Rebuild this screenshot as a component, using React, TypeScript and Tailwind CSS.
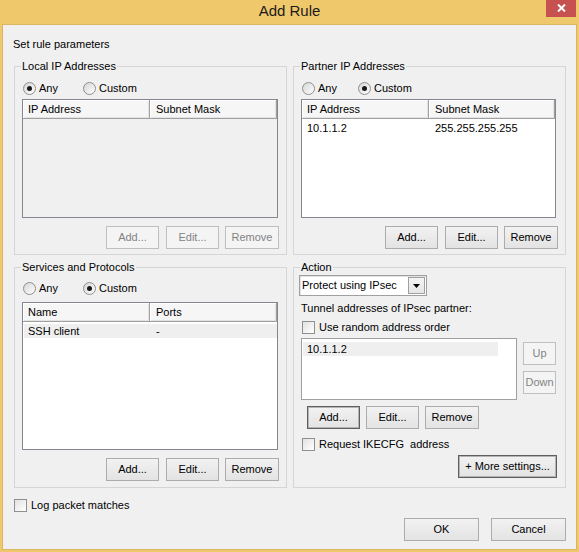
import type { ReactNode } from "react";

const btnBase =
  "flex h-[23px] items-center justify-center rounded-none border text-[11px] leading-[13px]";

function Button({
  label,
  className = "",
  disabled,
  focus,
}: {
  label: string;
  className?: string;
  disabled?: boolean;
  focus?: boolean;
}) {
  const look = disabled
    ? "border-[#bfbfbf] bg-[#f4f4f4] text-[#838383]"
    : focus
      ? "border-[#5f5f5f] bg-linear-to-b from-[#f2f2f2] to-[#e3e3e3] text-black shadow-[inset_0_0_0_1px_#b4b4b4]"
      : "border-[#acacac] bg-linear-to-b from-[#f2f2f2] to-[#e3e3e3] text-black";
  return (
    <button type="button" disabled={disabled} className={`${btnBase} ${look} ${className}`}>
      {label}
    </button>
  );
}

function Radio({ label, checked, className = "" }: { label: string; checked?: boolean; className?: string }) {
  return (
    <div className={`flex h-[13px] items-center gap-[3px] ${className}`}>
      <span className="flex h-[13px] w-[13px] items-center justify-center rounded-full border border-[#8e8f8f] bg-linear-to-br from-[#d6d6d6] to-white">
        {checked && <span className="h-[5px] w-[5px] rounded-full bg-[#1a1a1a]" />}
      </span>
      <span>{label}</span>
    </div>
  );
}

function Check({ label, className = "" }: { label: string; className?: string }) {
  return (
    <div className={`flex h-[13px] items-center gap-[4px] ${className}`}>
      <span className="h-[13px] w-[13px] border border-[#8e8f8f] bg-linear-to-br from-[#e2e2e2] to-white" />
      <span className="whitespace-pre">{label}</span>
    </div>
  );
}

function Group({
  title,
  className = "",
  legendClass = "-ml-px",
  children,
}: {
  title: string;
  className?: string;
  legendClass?: string;
  children: ReactNode;
}) {
  return (
    <fieldset className={`flex w-[273px] flex-col border border-[#d5d5d5] ${className}`}>
      <legend className={`px-px leading-[13px] ${legendClass}`}>{title}</legend>
      {children}
    </fieldset>
  );
}

type Row = { a: string; b: string; selected?: boolean };

function ListView({
  cols,
  rows,
  disabled,
  className = "",
}: {
  cols: [string, string];
  rows: Row[];
  disabled?: boolean;
  className?: string;
}) {
  return (
    <div
      className={`flex flex-col overflow-hidden border border-[#828790] ${
        disabled ? "bg-[#f0f0f0]" : "bg-white"
      } ${className}`}
    >
      <div className="flex h-[19px] shrink-0">
        <div className="flex w-[127px] items-center border border-t-0 border-l-0 border-[#a0a0a0] bg-[#f6f6f6] pl-[5px] shadow-[inset_1px_1px_0_#ffffff,inset_-1px_-1px_0_#e3e3e3]">
          {cols[0]}
        </div>
        <div className="flex flex-1 items-center border border-t-0 border-l-0 border-[#a0a0a0] bg-[#f6f6f6] pl-[6px] shadow-[inset_1px_1px_0_#ffffff,inset_-1px_-1px_0_#e3e3e3]">
          {cols[1]}
        </div>
      </div>
      <div className="flex flex-col pt-[2px]">
        {rows.map((r) => (
          <div
            key={r.a}
            className={`ml-px flex h-[14px] items-center ${r.selected ? "bg-[#efefef]" : ""}`}
          >
            <span className="w-[126px] pl-[4px]">{r.a}</span>
            <span className="pl-[6px]">{r.b}</span>
          </div>
        ))}
      </div>
    </div>
  );
}

function ButtonTrio({ disabled, className = "" }: { disabled?: boolean; className?: string }) {
  return (
    <div className={`flex justify-end ${className}`}>
      <Button label="Add..." disabled={disabled} className="w-[53px]" />
      <Button label="Edit..." disabled={disabled} className="ml-[7px] w-[53px]" />
      <Button label="Remove" disabled={disabled} className="ml-[6px] w-[54px]" />
    </div>
  );
}

export default function App() {
  return (
    <div className="flex h-[552px] w-[579px] flex-col bg-[#f0c86c] font-['Liberation_Sans',Arial,sans-serif] text-[11px] leading-[13px] text-black">
      <div className="relative flex h-[25px] shrink-0 justify-center pt-[2px]">
        <span className="text-[15px] leading-[18px] text-[#1b1b1b]">Add Rule</span>
        <div className="absolute top-0 right-[3px] flex h-[17px] w-[30px] items-center justify-center bg-[#c75050]">
          <svg width="9" height="8" viewBox="0 0 9 8" className="-mt-[2px]">
            <path d="M1 0.5 L8 7.5 M8 0.5 L1 7.5" stroke="#ffffff" strokeWidth="2" />
          </svg>
        </div>
      </div>

      <div className="mx-[3px] flex h-[524px] flex-col bg-[#f0f0f0] pt-[13px] pr-[10px] pl-[11px] shadow-[0_0_0_1px_#dbb662]">
        <div className="-ml-px h-[13px]">Set rule parameters</div>

        <div className="mt-[9px] flex gap-[6px]">
          <Group title="Local IP Addresses" className="px-[7px] pb-[5px]">
            <div className="mt-[9px] flex">
              <Radio label="Any" checked className="ml-px w-[60px]" />
              <Radio label="Custom" />
            </div>
            <ListView
              cols={["IP Address", "Subnet Mask"]}
              rows={[]}
              disabled
              className="mt-[4px] h-[119px] w-[256px]"
            />
            <ButtonTrio disabled className="mt-[8px]" />
          </Group>

          <Group title="Partner IP Addresses" className="px-[7px] pb-[5px]">
            <div className="mt-[9px] flex">
              <Radio label="Any" className="ml-px w-[56px]" />
              <Radio label="Custom" checked />
            </div>
            <ListView
              cols={["IP Address", "Subnet Mask"]}
              rows={[{ a: "10.1.1.2", b: "255.255.255.255" }]}
              className="mt-[4px] h-[119px] w-[255px]"
            />
            <ButtonTrio className="mt-[8px]" />
          </Group>
        </div>

        <div className="mt-[6px] flex gap-[6px]">
          <Group title="Services and Protocols" className="px-[7px] pb-[6px]">
            <div className="mt-[8px] flex">
              <Radio label="Any" className="ml-px w-[60px]" />
              <Radio label="Custom" checked />
            </div>
            <ListView
              cols={["Name", "Ports"]}
              rows={[{ a: "SSH client", b: "-", selected: true }]}
              className="mt-[7px] h-[148px] w-[256px]"
            />
            <ButtonTrio className="mt-[8px]" />
          </Group>

          <Group title="Action" className="pb-[9px]" legendClass="ml-[6px]">
            <div className="mt-[1px] ml-[5px] flex h-[21px] w-[128px] items-center border border-[#a0a0a0] bg-white shadow-[inset_1px_1px_0_#e3e3e3]">
              <span className="flex-1 pl-[2px]">Protect using IPsec</span>
              <span className="mr-px flex h-[17px] w-[17px] items-center justify-center border border-[#a0a0a0] bg-linear-to-b from-[#f4f4f4] to-[#e6e6e6]">
                <svg width="7" height="4" viewBox="0 0 7 4">
                  <path d="M0 0 H7 L3.5 4 Z" fill="#000000" />
                </svg>
              </span>
            </div>
            <div className="mt-[6px] pl-[7px]">Tunnel addresses of IPsec partner:</div>
            <Check label="Use random address order" className="mt-[6px] pl-[8px]" />
            <div className="mt-[4px] flex pl-[7px]">
              <div className="h-[62px] w-[216px] border border-[#a0a0a0] bg-white pt-[3px] pl-px">
                <div className="flex h-[14px] w-[195px] items-center bg-[#efefef] pl-[4px]">10.1.1.2</div>
              </div>
              <div className="ml-[6px] flex flex-col gap-[6px] pt-[4px]">
                <Button label="Up" disabled className="w-[33px]" />
                <Button label="Down" disabled className="w-[33px]" />
              </div>
            </div>
            <div className="mt-[6px] flex pl-[13px]">
              <Button label="Add..." focus className="w-[53px]" />
              <Button label="Edit..." className="ml-[6px] w-[53px]" />
              <Button label="Remove" className="ml-[6px] w-[54px]" />
            </div>
            <Check label="Request IKECFG  address" className="mt-[9px] pl-[8px]" />
            <div className="mt-[4px] flex justify-end pr-[8px]">
              <Button label="+ More settings..." focus className="w-[99px]" />
            </div>
          </Group>
        </div>

        <Check label="Log packet matches" className="mt-[11px]" />

        <div className="mt-[6px] flex justify-end gap-[12px]">
          <Button label="OK" className="w-[75px]" />
          <Button label="Cancel" className="w-[75px]" />
        </div>
      </div>
    </div>
  );
}
